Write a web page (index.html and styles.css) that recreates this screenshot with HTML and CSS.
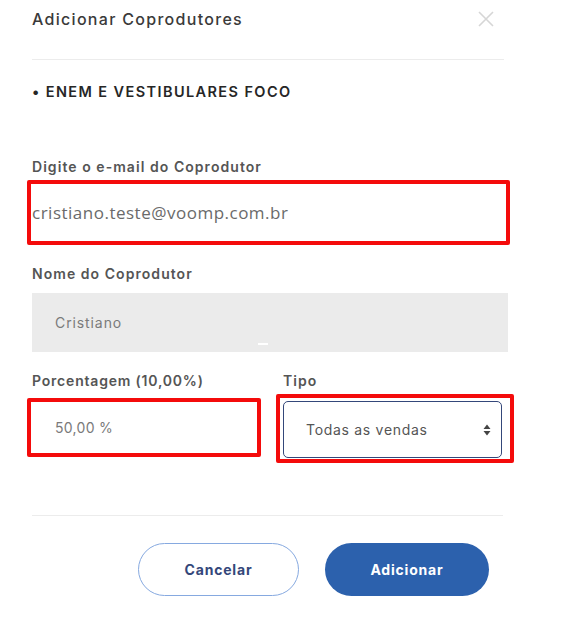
FILE: index.html
```html
<!DOCTYPE html>
<html lang="pt-BR">
<head>
  <meta charset="UTF-8">
  <title>Adicionar Coprodutores</title>
  <link rel="stylesheet" href="styles.css">
</head>
<body>
  <div class="modal">
    <!-- cabeçalho -->
    <div class="modal-header">
      <h1 class="modal-title">Adicionar Coprodutores</h1>
      <span class="close-btn">
        <svg width="16" height="16" viewBox="0 0 16 16"><path d="M1 1 L15 15 M15 1 L1 15" stroke="#d6d6d6" stroke-width="1.6" fill="none"/></svg>
      </span>
    </div>

    <div class="product-name">• ENEM E VESTIBULARES FOCO</div>

    <!-- email -->
    <div class="field field-email">
      <label class="field-label">Digite o e-mail do Coprodutor</label>
      <div class="mark mark-email">
        <span class="email-value">cristiano.teste@voomp.com.br</span>
      </div>
    </div>

    <!-- nome -->
    <div class="field field-name">
      <label class="field-label">Nome do Coprodutor</label>
      <div class="input-disabled">
        <span>Cristiano</span>
        <i class="caret"></i>
      </div>
    </div>

    <!-- porcentagem + tipo -->
    <div class="field-row">
      <div class="field col-left">
        <label class="field-label">Porcentagem (10,00%)</label>
        <div class="mark mark-percent">50,00 %</div>
      </div>
      <div class="field col-right">
        <label class="field-label">Tipo</label>
        <div class="mark mark-select">
          <div class="select">
            <span>Todas as vendas</span>
            <svg width="8" height="12" viewBox="0 0 8 12"><path d="M4 0.5 L7.5 5 L0.5 5 Z M4 11.5 L7.5 7 L0.5 7 Z" fill="#444"/></svg>
          </div>
        </div>
      </div>
    </div>

    <!-- rodapé -->
    <div class="modal-footer">
      <button class="btn btn-outline">Cancelar</button>
      <button class="btn btn-primary">Adicionar</button>
    </div>
  </div>
</body>
</html>
```

FILE: styles.css
```css
/* estilos gerais */
body {
  margin: 0;
  background: #fff;
  font-family: 'Inter', 'Open Sans', sans-serif;
}

.modal {
  width: 476px;
  padding: 0 0 0 32px;
}

.modal-header {
  display: flex;
  justify-content: space-between;
  align-items: center;
  height: 38px;
  border-bottom: 1px solid #ececec;
  padding-bottom: 21px;
  width: 472px;
}

.modal-title {
  margin: 0;
  font-size: 16px;
  font-weight: 500;
  color: #3a3a3a;
  letter-spacing: 1.3px;
}

.close-btn {
  display: flex;
  margin-right: 10px;
}

.product-name {
  margin-top: 23px;
  font-size: 14.5px;
  font-weight: 600;
  color: #262626;
  letter-spacing: 1.4px;
}

.field {
  display: flex;
  flex-direction: column;
}

.field-label {
  font-size: 14px;
  font-weight: 600;
  color: #555;
  letter-spacing: 1.05px;
  line-height: 17px;
}

.field-email {
  margin-top: 58px;
}

.field-name {
  margin-top: 20px;
}

/* marcações vermelhas */
.mark {
  border: 4px solid #f40b0b;
  border-radius: 2px;
  box-sizing: border-box;
}

.mark-email {
  margin-left: -5px;
  width: 483px;
  height: 65px;
  display: flex;
  align-items: center;
  padding-left: 1px;
  margin-top: 5px;
}

.email-value {
  font-family: 'Open Sans', sans-serif;
  font-size: 17px;
  color: #6a6a6a;
  letter-spacing: 0.5px;
}

.input-disabled {
  width: 476px;
  height: 59px;
  background: #ebebeb;
  display: flex;
  align-items: center;
  padding-left: 23px;
  box-sizing: border-box;
  position: relative;
  font-size: 14px;
  color: #7a7a7a;
  letter-spacing: 0.9px;
  margin-top: 11px;
}

.caret {
  position: absolute;
  left: 226px;
  bottom: 7px;
  width: 10px;
  height: 2px;
  background: #fff;
}

.field-row {
  display: flex;
  margin-top: 20px;
}

.col-left {
  width: 251px;
  flex-shrink: 0;
}

.col-left .field-label {
  letter-spacing: 0.8px;
}

.mark-percent {
  margin-left: -5px;
  width: 234px;
  height: 59px;
  display: flex;
  align-items: center;
  padding-left: 24px;
  font-size: 14px;
  color: #7a7a7a;
  letter-spacing: 0.3px;
  margin-top: 9px;
}

.col-right {
  flex-shrink: 0;
}

.mark-select {
  margin-left: -7px;
  width: 238px;
  height: 69px;
  padding: 3px 8px 1px 3px;
  margin-top: 5px;
}

.select {
  height: 100%;
  border: 1.5px solid #34477a;
  border-radius: 5px;
  box-sizing: border-box;
  display: flex;
  align-items: center;
  justify-content: space-between;
  padding: 0 10px 0 22px;
  font-size: 14px;
  color: #555;
  letter-spacing: 0.7px;
}

.modal-footer {
  margin-top: 52px;
  width: 471px;
  border-top: 1px solid #ececec;
  padding-top: 27px;
  display: flex;
  justify-content: flex-end;
  gap: 26px;
  padding-right: 14px;
  box-sizing: border-box;
}

.btn {
  height: 53px;
  border-radius: 27px;
  font-family: 'Inter', sans-serif;
  font-size: 14px;
  font-weight: 700;
  letter-spacing: 0.8px;
  cursor: pointer;
}

.btn-outline {
  width: 161px;
  background: #fff;
  border: 1.5px solid #86a9e0;
  color: #34477a;
}

.btn-primary {
  width: 164px;
  background: #2c61ad;
  border: none;
  color: #fff;
}
```
